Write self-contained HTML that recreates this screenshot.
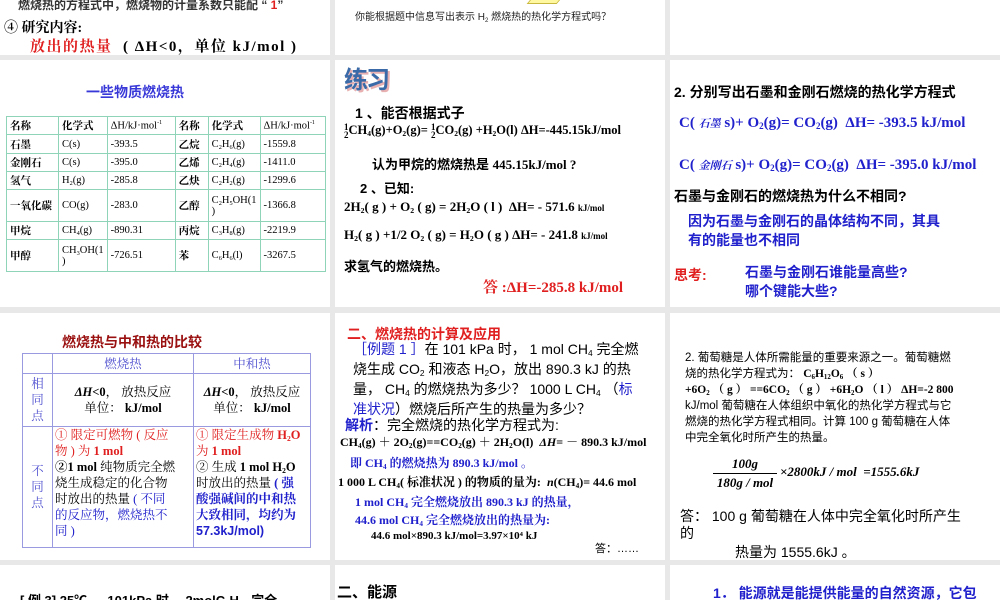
<!DOCTYPE html>
<html><head><meta charset="utf-8"><style>
*{margin:0;padding:0;box-sizing:border-box}
body{width:1000px;height:600px;background:#e8e8e8;position:relative;overflow:hidden;font-family:"Liberation Sans","Noto Sans CJK SC",sans-serif;color:#000}
.s{position:absolute;background:#fff;overflow:hidden}
.t{position:absolute;white-space:nowrap}
.b{font-weight:bold}
.sr{font-family:"Liberation Serif","Noto Serif CJK SC",serif}
.bl{color:#2020cc}
.rd{color:#e02020}
sub{font-size:60%;vertical-align:-2px;line-height:0}
table{border-collapse:collapse;position:absolute}
td{border:1px solid #8fd4b8;font-family:"Liberation Serif","Noto Serif CJK SC",serif;font-size:10.5px;padding:0 3px;vertical-align:middle}
.t2 td{border:1px solid #9a9ae0;font-size:12.5px;text-align:center;line-height:16px;padding:0 2px}
</style></head><body>
<!-- row1 -->
<div class="s" style="left:0;top:0;width:330px;height:55px">
<div class="t b" style="left:18px;top:-4px;font-size:12px;color:#333">燃烧热的方程式中，燃烧物的计量系数只能配 “ <span class="rd">1</span>”</div>
<div class="t b sr" style="left:4px;top:17px;font-size:14px">④ 研究内容:</div>
<div class="t b sr" style="left:30px;top:35px;font-size:15px;letter-spacing:1.5px"><span class="rd">放出的热量</span> &nbsp;( ΔH&lt;0，单位 kJ/mol )</div>
</div>
<div class="s" style="left:335px;top:0;width:330px;height:55px">
<div style="position:absolute;left:195px;top:-4px;width:30px;height:8px;background:#fff8a0;border:1px solid #c8b840;transform:skewX(-40deg)"></div>
<div class="t" style="left:20px;top:8px;font-size:10px;color:#222">你能根据题中信息写出表示 H<sub>2</sub> 燃烧热的热化学方程式吗？</div>
</div>
<div class="s" style="left:670px;top:0;width:330px;height:55px"></div>

<!-- row2 -->
<div class="s" style="left:0;top:60px;width:330px;height:247px">
<div class="t b" style="left:86px;top:22px;font-size:14px;color:#3838d8">一些物质燃烧热</div>
<table style="left:6px;top:56px;width:320px">
<tr style="height:18px"><td style="width:52px"><b>名称</b></td><td style="width:47px"><b>化学式</b></td><td style="width:68px">ΔH/kJ·mol<sup style="font-size:6px">-1</sup></td><td style="width:33px"><b>名称</b></td><td style="width:49px"><b>化学式</b></td><td>ΔH/kJ·mol<sup style="font-size:6px">-1</sup></td></tr>
<tr style="height:19px"><td><b>石墨</b></td><td>C(s)</td><td>-393.5</td><td><b>乙烷</b></td><td>C<sub>2</sub>H<sub>6</sub>(g)</td><td>-1559.8</td></tr>
<tr style="height:18px"><td><b>金刚石</b></td><td>C(s)</td><td>-395.0</td><td><b>乙烯</b></td><td>C<sub>2</sub>H<sub>4</sub>(g)</td><td>-1411.0</td></tr>
<tr style="height:18px"><td><b>氢气</b></td><td>H<sub>2</sub>(g)</td><td>-285.8</td><td><b>乙炔</b></td><td>C<sub>2</sub>H<sub>2</sub>(g)</td><td>-1299.6</td></tr>
<tr style="height:32px"><td><b>一氧化碳</b></td><td>CO(g)</td><td>-283.0</td><td><b>乙醇</b></td><td>C<sub>2</sub>H<sub>5</sub>OH(1<br>)</td><td>-1366.8</td></tr>
<tr style="height:18px"><td><b>甲烷</b></td><td>CH<sub>4</sub>(g)</td><td>-890.31</td><td><b>丙烷</b></td><td>C<sub>3</sub>H<sub>8</sub>(g)</td><td>-2219.9</td></tr>
<tr style="height:32px"><td><b>甲醇</b></td><td>CH<sub>3</sub>OH(1<br>)</td><td>-726.51</td><td><b>苯</b></td><td>C<sub>6</sub>H<sub>6</sub>(l)</td><td>-3267.5</td></tr>
</table>
</div>
<div class="s" style="left:335px;top:60px;width:330px;height:247px">
<div class="t b" style="left:9px;top:0px;font-size:24px;color:#3a6aa8;text-shadow:2px 2px 0 #e8b0b0;letter-spacing:-2px">练习</div>
<div class="t b" style="left:20px;top:43px;font-size:14px">1 、能否根据式子</div>
<div class="t b sr" style="left:9px;top:63px;font-size:12.5px"><span style="display:inline-block;font-size:9px;line-height:8px;vertical-align:middle;text-align:center">1<br>2</span>CH<sub>4</sub>(g)+O<sub>2</sub>(g)= <span style="display:inline-block;font-size:9px;line-height:8px;vertical-align:middle;text-align:center">1<br>2</span>CO<sub>2</sub>(g) +H<sub>2</sub>O(l) ΔH=-445.15kJ/mol</div>
<div class="t b" style="left:37px;top:94px;font-size:13px">认为甲烷的燃烧热是 <span class="sr">445.15kJ/mol ?</span></div>
<div class="t b" style="left:25px;top:118px;font-size:13px">2 、已知:</div>
<div class="t b sr" style="left:9px;top:139px;font-size:13px">2H<sub>2</sub>( g ) + O<sub>2</sub> ( g) = 2H<sub>2</sub>O ( l ) &nbsp;ΔH= - 571.6 <span style="font-size:9px">kJ/mol</span></div>
<div class="t b sr" style="left:9px;top:167px;font-size:13px">H<sub>2</sub>( g ) +1/2 O<sub>2</sub> ( g) = H<sub>2</sub>O ( g ) ΔH= - 241.8 <span style="font-size:9px">kJ/mol</span></div>
<div class="t b" style="left:9px;top:196px;font-size:13px">求氢气的燃烧热。</div>
<div class="t b sr rd" style="left:148px;top:216px;font-size:15px">答 :ΔH=-285.8 kJ/mol</div>
</div>
<div class="s" style="left:670px;top:60px;width:330px;height:247px">
<div class="t b" style="left:4px;top:22px;font-size:14px">2. 分别写出石墨和金刚石燃烧的热化学方程式</div>
<div class="t b sr bl" style="left:9px;top:55px;font-size:15px">C( <i style="font-size:11px">石墨</i> s)+ O<sub>2</sub>(g)= CO<sub>2</sub>(g) &nbsp;ΔH= -393.5 kJ/mol</div>
<div class="t b sr bl" style="left:9px;top:97px;font-size:15px">C( <i style="font-size:11px">金刚石</i> s)+ O<sub>2</sub>(g)= CO<sub>2</sub>(g) &nbsp;ΔH= -395.0 kJ/mol</div>
<div class="t b" style="left:4px;top:126px;font-size:14px">石墨与金刚石的燃烧热为什么不相同?</div>
<div class="t b bl" style="left:18px;top:152px;font-size:14px;line-height:19px">因为石墨与金刚石的晶体结构不同，其具<br>有的能量也不相同</div>
<div class="t b rd" style="left:4px;top:205px;font-size:14px">思考:</div>
<div class="t b bl" style="left:75px;top:203px;font-size:14px;line-height:19px">石墨与金刚石谁能量高些?<br>哪个键能大些?</div>
</div>

<!-- row3 -->
<div class="s" style="left:0;top:313px;width:330px;height:247px">
<div class="t b" style="left:62px;top:19px;font-size:14px;color:#9a1010">燃烧热与中和热的比较</div>
<table class="t2" style="left:22px;top:40px;width:289px">
<tr style="height:20px"><td style="width:30px"></td><td style="width:141px;color:#5050d0">燃烧热</td><td style="color:#5050d0">中和热</td></tr>
<tr style="height:53px"><td style="color:#5050d0">相<br>同<br>点</td><td><b><i>ΔH</i>&lt;0</b>， 放热反应<br>单位： <b>kJ/mol</b></td><td><b><i>ΔH</i>&lt;0</b>， 放热反应<br>单位： <b>kJ/mol</b></td></tr>
<tr style="height:121px"><td style="color:#5050d0">不<br>同<br>点</td><td style="text-align:left;vertical-align:top;white-space:nowrap"><span class="rd">① 限定可燃物 ( 反应<br>物 ) 为 <b>1 mol</b></span><br><b>②1 mol</b> 纯物质完全燃<br>烧生成稳定的化合物<br>时放出的热量 <span class="bl">( 不同<br>的反应物，燃烧热不<br>同 )</span></td><td style="text-align:left;vertical-align:top;white-space:nowrap"><span class="rd">① 限定生成物 <b>H<sub>2</sub>O</b><br>为 <b>1 mol</b></span><br>② 生成 <b>1 mol H<sub>2</sub>O</b><br>时放出的热量 <b class="bl">( 强<br>酸强碱间的中和热<br>大致相同，均约为<br><span style="font-family:'Liberation Sans',sans-serif">57.3kJ/mol)</span></b></td></tr>
</table>
</div>
<div class="s" style="left:335px;top:313px;width:330px;height:247px">
<div class="t b rd" style="left:12px;top:11px;font-size:14px">二、燃烧热的计算及应用</div>
<div class="t" style="left:18px;top:26px;font-size:14px;line-height:20px"><span class="bl">［例题 1 ］</span>在 101 kPa 时， 1 mol CH<sub>4</sub> 完全燃<br>烧生成 CO<sub>2</sub> 和液态 H<sub>2</sub>O，放出 890.3 kJ 的热<br>量， CH<sub>4</sub> 的燃烧热为多少？ 1000 L CH<sub>4</sub> （<span class="bl">标</span><br><span class="bl">准状况</span>）燃烧后所产生的热量为多少？</div>
<div class="t" style="left:10px;top:102px;font-size:14px"><span class="bl b">解析</span>：完全燃烧的热化学方程式为:</div>
<div class="t b sr" style="left:5px;top:120px;font-size:12px">CH<sub>4</sub>(g) ＋ 2O<sub>2</sub>(g)==CO<sub>2</sub>(g) ＋ 2H<sub>2</sub>O(l) &nbsp;<i>ΔH</i>= － 890.3 kJ/mol</div>
<div class="t b sr bl" style="left:15px;top:141px;font-size:12px">即 CH<sub>4</sub> 的燃烧热为 890.3 kJ/mol 。</div>
<div class="t b sr" style="left:3px;top:160px;font-size:12px">1 000 L CH<sub>4</sub>( 标准状况 ) 的物质的量为: &nbsp;<i>n</i>(CH<sub>4</sub>)= 44.6 mol</div>
<div class="t b sr bl" style="left:20px;top:180px;font-size:12px">1 mol CH<sub>4</sub> 完全燃烧放出 890.3 kJ 的热量，</div>
<div class="t b sr bl" style="left:20px;top:198px;font-size:12px">44.6 mol CH<sub>4</sub> 完全燃烧放出的热量为:</div>
<div class="t b sr" style="left:36px;top:217px;font-size:11px">44.6 mol×890.3 kJ/mol=3.97×10⁴ kJ</div>
<div class="t" style="left:260px;top:227px;font-size:11px">答：……</div>
</div>
<div class="s" style="left:670px;top:313px;width:330px;height:247px">
<div class="t" style="left:15px;top:37px;font-size:11.5px;line-height:16px">2. 葡萄糖是人体所需能量的重要来源之一。葡萄糖燃<br>烧的热化学方程式为： <b class="sr">C<sub>6</sub>H<sub>12</sub>O<sub>6</sub> （ s ）</b><br><b class="sr">+6O<sub>2</sub> （ g ） ==6CO<sub>2</sub> （ g ） +6H<sub>2</sub>O （ l ） ΔH=-2 800</b><br>kJ/mol 葡萄糖在人体组织中氧化的热化学方程式与它<br>燃烧的热化学方程式相同。计算 100 g 葡萄糖在人体<br>中完全氧化时所产生的热量。</div>
<div class="t b sr" style="left:43px;top:142px;font-size:13px;text-align:center;width:64px;line-height:18px"><i>100g</i><div style="border-top:1px solid #000"></div><i>180g / mol</i></div>
<div class="t b sr" style="left:110px;top:151px;font-size:13px"><i>×2800kJ / mol</i> &nbsp;<i>=1555.6kJ</i></div>
<div class="t" style="left:10px;top:195px;font-size:14px;line-height:17px">答：&nbsp;100 g 葡萄糖在人体中完全氧化时所产生<br>的</div>
<div class="t" style="left:65px;top:229px;font-size:14px">热量为 1555.6kJ 。</div>
</div>

<!-- row4 -->
<div class="s" style="left:0;top:565px;width:330px;height:35px">
<div class="t b" style="left:20px;top:25px;font-size:13px">[ 例 3] 25℃ ， 101kPa 时， 2molC<sub>4</sub>H<sub>10</sub> 完全</div>
</div>
<div class="s" style="left:335px;top:565px;width:330px;height:35px">
<div class="t b" style="left:2px;top:16px;font-size:15px">二、能源</div>
</div>
<div class="s" style="left:670px;top:565px;width:330px;height:35px">
<div class="t b bl" style="left:43px;top:18px;font-size:14px">1． 能源就是能提供能量的自然资源，它包</div>
</div>
</body></html>
